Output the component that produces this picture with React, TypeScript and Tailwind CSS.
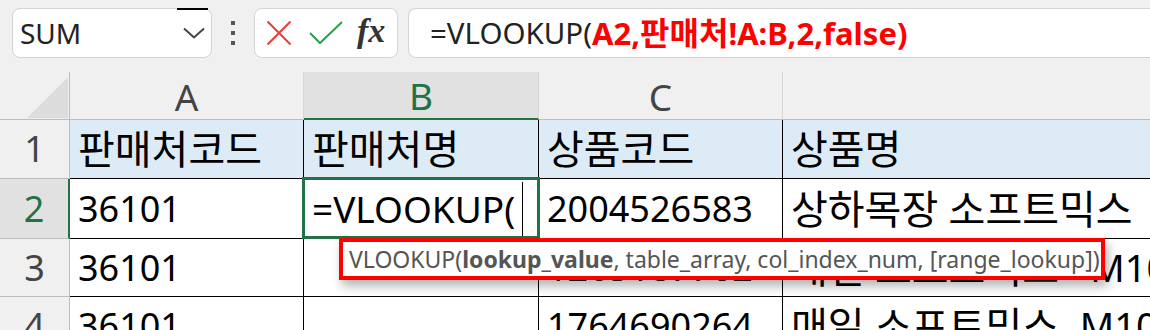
import React from "react";

const F = "font-['Noto_Sans','Noto_Sans_CJK_KR',sans-serif]";

function Cell({
  w,
  children,
  className = "",
}: {
  w: string;
  children?: React.ReactNode;
  className?: string;
}) {
  return (
    <div
      className={`${w} shrink-0 h-full box-border border-r border-b border-black flex items-center pl-[8px] whitespace-pre overflow-hidden text-[36px] text-black ${className}`}
    >
      {children}
    </div>
  );
}

function RowHead({ n, active = false }: { n: string; active?: boolean }) {
  return (
    <div
      className={`w-[70px] shrink-0 h-full box-border border-b border-[#bdbdbd] flex items-center justify-center text-[36px] ${
        active
          ? "bg-[#e1e1e1] text-[#217346] border-r-2 border-r-[#217346]"
          : "bg-[#f0f0f0] text-[#444] border-r border-r-[#bdbdbd]"
      }`}
    >
      {n}
    </div>
  );
}

export default function App() {
  return (
    <div
      className={`relative w-[1150px] h-[330px] overflow-hidden bg-[#f0f0f0] ${F}`}
    >
      {/* Formula bar */}
      <div className="h-[72px] flex items-start pt-[8px] pl-[12px]">
        <div className="relative w-[200px] h-[50px] shrink-0 bg-white border border-[#d4d4d4] rounded-[8px] flex items-center justify-between pl-[7px] pr-[8px]">
          <span className="text-[28px] leading-none text-[#222]">SUM</span>
          <svg width="22" height="12" viewBox="0 0 22 12" className="mr-[-2px]">
            <polyline
              points="1,1.5 11,10.5 21,1.5"
              fill="none"
              stroke="#444"
              strokeWidth="2"
            />
          </svg>
          <div className="absolute top-[-1px] left-[164px] w-[31px] h-[1.5px] bg-black" />
        </div>
        <div className="w-[42px] h-[50px] shrink-0 flex flex-col items-center justify-center gap-[6px]">
          <div className="w-[4px] h-[4px] bg-[#555]" />
          <div className="w-[4px] h-[4px] bg-[#555]" />
          <div className="w-[4px] h-[4px] bg-[#555]" />
        </div>
        <div className="w-[144px] h-[50px] shrink-0 bg-white border border-[#d4d4d4] rounded-[8px] flex items-center pl-[11px]">
          <svg width="26" height="26" viewBox="0 0 26 26">
            <path
              d="M1.5 1.5 L24.5 24.5 M24.5 1.5 L1.5 24.5"
              stroke="#ea3b3b"
              strokeWidth="2"
              fill="none"
            />
          </svg>
          <svg width="34" height="24" viewBox="0 0 34 24" className="ml-[17px]">
            <polyline
              points="1,12 11,22 33,1"
              stroke="#2c9f4b"
              strokeWidth="2"
              fill="none"
            />
          </svg>
          <span className="ml-[14px] text-[34px] leading-none italic font-bold text-[#333] font-['Liberation_Serif',serif] -mt-[4px]">
            fx
          </span>
        </div>
        <div className="ml-[10px] flex-1 h-[50px] bg-white border border-[#d4d4d4] rounded-l-[8px] border-r-0 flex items-center pl-[21px] whitespace-nowrap leading-none">
          <span className="text-[29.5px] text-[#222]">=VLOOKUP(</span>
          <span className="text-[31px] text-[#ff0000] font-bold">A2,</span>
          <span className="text-[32px] text-[#ff0000] font-bold">판매처</span>
          <span className="text-[31px] text-[#ff0000] font-bold">!A:B,2,false)</span>
        </div>
      </div>

      {/* Column header */}
      <div className="flex h-[48px]">
        <div className="relative w-[70px] shrink-0 h-full box-border border-r border-b border-[#bdbdbd] bg-[#f0f0f0]">
          <svg
            width="41"
            height="41"
            viewBox="0 0 41 41"
            className="absolute left-[27px] top-[5px]"
          >
            <polygon points="0,41 41,41 41,0" fill="#dcdcdc" />
          </svg>
        </div>
        <div className="w-[234px] shrink-0 h-full box-border border-r border-r-[#d6d6d6] border-b border-b-[#bdbdbd] flex items-center justify-center text-[37px] text-[#444] pt-[2px]">
          A
        </div>
        <div className="w-[235px] shrink-0 h-full box-border border-r border-r-[#d6d6d6] border-b-2 border-b-[#217346] bg-[#e1e1e1] flex items-center justify-center text-[37px] text-[#217346] pt-[2px]">
          B
        </div>
        <div className="w-[244px] shrink-0 h-full box-border border-r border-r-[#d6d6d6] border-b border-b-[#bdbdbd] flex items-center justify-center text-[37px] text-[#444] pt-[2px]">
          C
        </div>
        <div className="flex-1 h-full box-border border-b border-b-[#bdbdbd]" />
      </div>

      {/* Row 1 */}
      <div className="flex h-[59px] bg-white">
        <RowHead n="1" />
        <Cell w="w-[234px]" className="bg-[#ddebf7] text-[40px]">판매처코드</Cell>
        <Cell w="w-[235px]" className="bg-[#ddebf7] text-[40px]">판매처명</Cell>
        <Cell w="w-[244px]" className="bg-[#ddebf7] text-[40px]">상품코드</Cell>
        <Cell w="w-[400px]" className="bg-[#ddebf7] text-[40px]">상품명</Cell>
      </div>

      {/* Row 2 */}
      <div className="flex h-[60px] bg-white">
        <RowHead n="2" active />
        <Cell w="w-[234px]">36101</Cell>
        <div className="relative w-[235px] shrink-0 h-full box-border border-r border-b border-black flex items-center pl-[8px] whitespace-nowrap text-[37px] text-black">
          =VLOOKUP(
          <div className="absolute left-[-2px] right-[-2px] top-[-2px] bottom-[-1px] border-[3px] border-[#217346]" />
          <div className="absolute left-[218px] top-[3px] w-[1px] h-[54px] bg-black" />
        </div>
        <Cell w="w-[244px]">2004526583</Cell>
        <Cell w="w-[400px]" className="text-[40px]">상하목장 소프트믹스</Cell>
      </div>

      {/* Row 3 */}
      <div className="flex h-[58px] bg-white">
        <RowHead n="3" />
        <Cell w="w-[234px]">36101</Cell>
        <Cell w="w-[235px]" />
        <Cell w="w-[244px]">1263187702</Cell>
        <Cell w="w-[400px]" className="text-[40px]">
          <span>{"매일 소프트믹스   "}</span>
          <span className="text-[38px]">M10</span>
        </Cell>
      </div>

      {/* Row 4 */}
      <div className="flex h-[58px] bg-white">
        <RowHead n="4" />
        <Cell w="w-[234px]">36101</Cell>
        <Cell w="w-[235px]" />
        <Cell w="w-[244px]">1764690264</Cell>
        <Cell w="w-[400px]" className="text-[40px]">
          <span>{"매일 소프트믹스  "}</span>
          <span className="text-[38px]">M10</span>
        </Cell>
      </div>

      {/* Function tooltip */}
      <div className="absolute left-[339px] top-[238px] w-[766px] h-[42px] box-border border-4 border-[#ff0000] bg-white shadow-[3px_6px_10px_rgba(0,0,0,0.3)] flex items-center pl-[6px] whitespace-nowrap text-[23px] leading-none text-[#555]">
        VLOOKUP(<span className="font-bold">lookup_value</span>, table_array,
        col_index_num, [range_lookup])
      </div>
    </div>
  );
}
